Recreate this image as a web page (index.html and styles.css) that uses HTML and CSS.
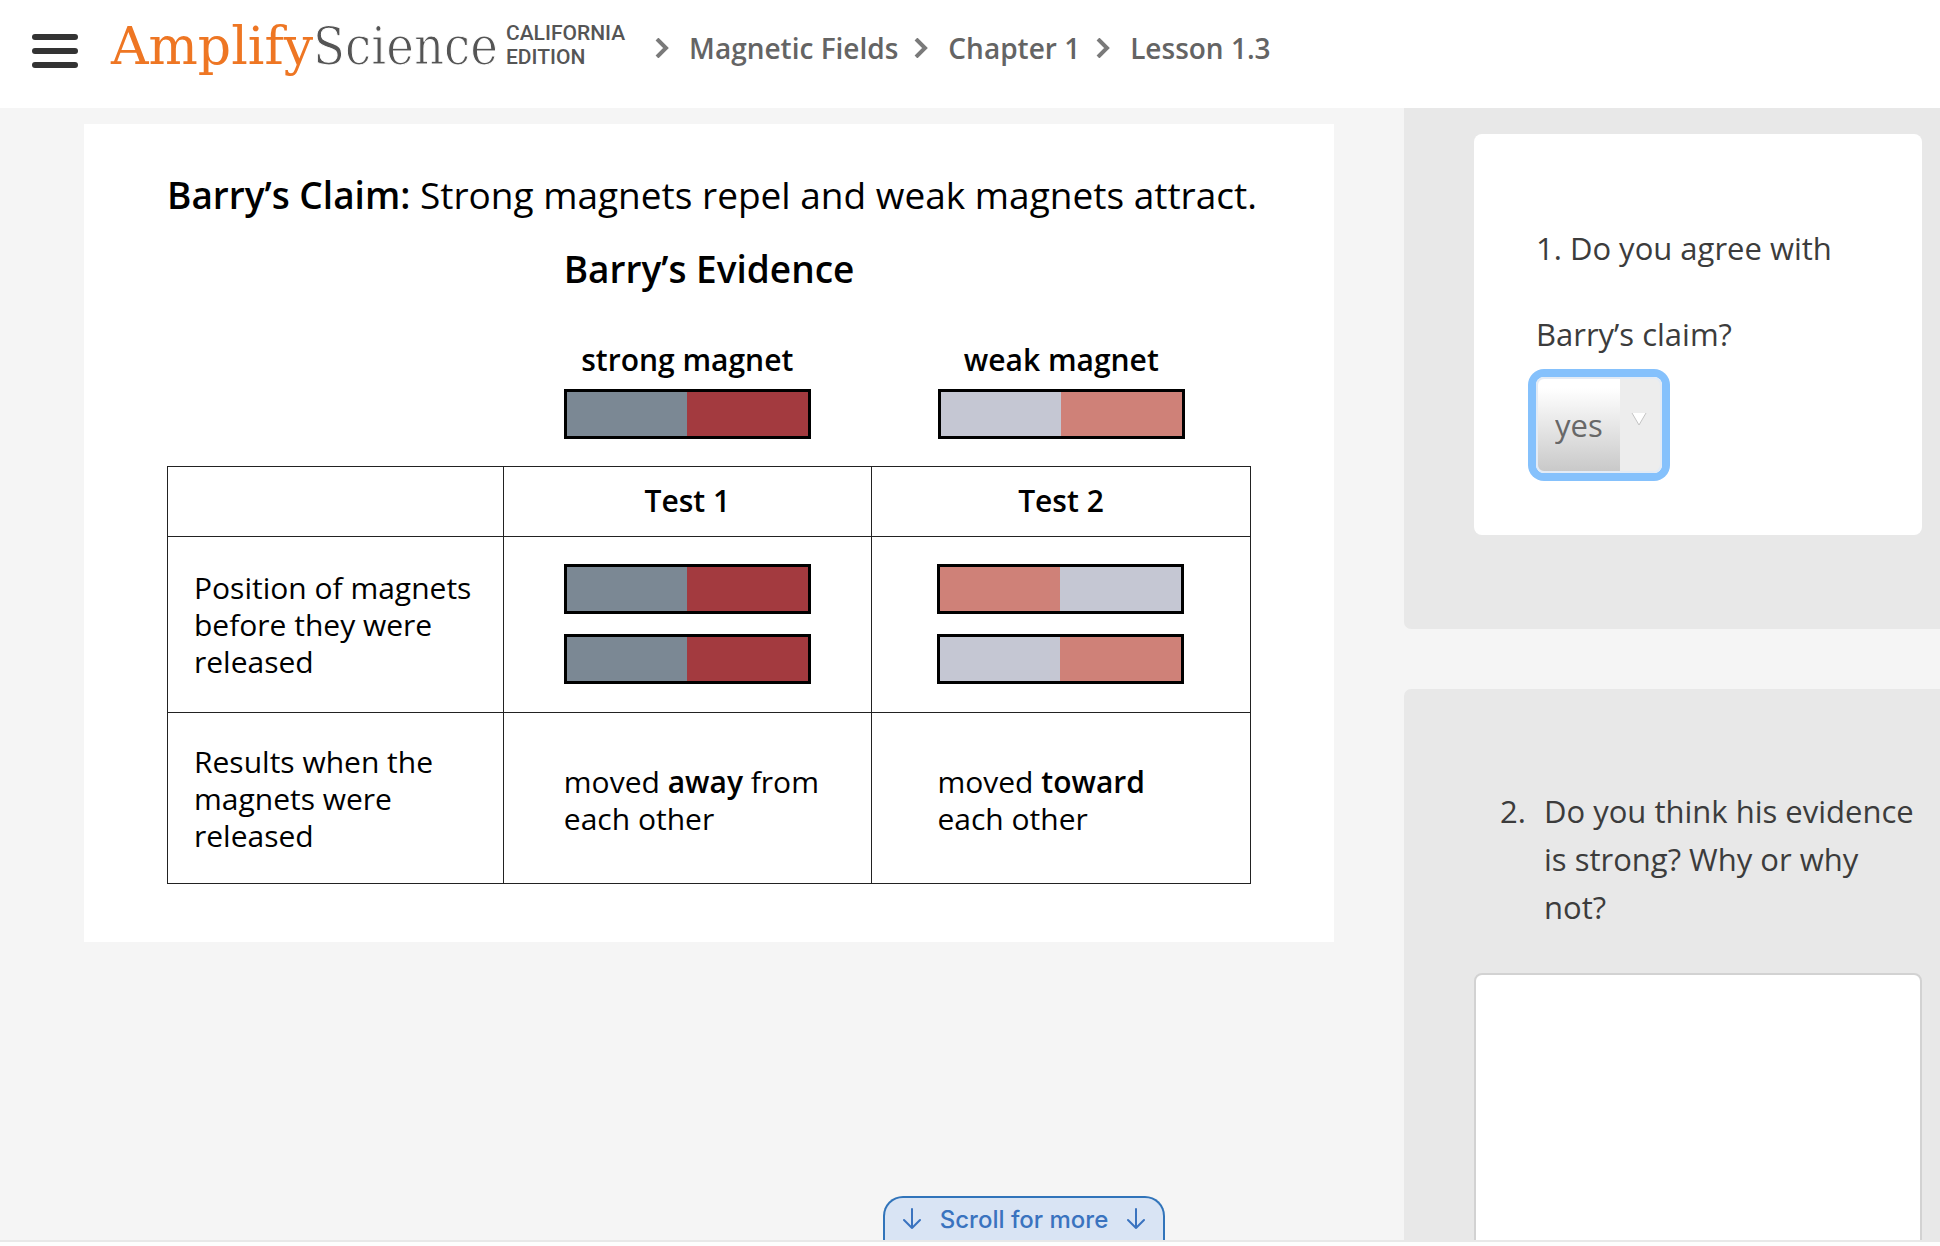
FILE: index.html
```html
<!DOCTYPE html>
<html lang="en">
<head>
    <meta charset="UTF-8">
    <meta name="viewport" content="width=device-width, initial-scale=1.0">
    <link rel="stylesheet" href="styles.css">
    <title>Magnetic Fields - Lesson 1.3</title>
</head>
<body>
    <header class="topbar">
        <button class="menu" type="button" aria-label="Menu">
            <span></span>
            <span></span>
            <span></span>
        </button>
        <a class="logo" href="#">
            <span class="logo-amplify">Amplify</span><span class="logo-science">Science</span>
            <span class="logo-edition">CALIFORNIA<br>EDITION</span>
        </a>
        <nav class="breadcrumbs" aria-label="Breadcrumb">
            <svg class="chevron" viewBox="0 0 14 20" aria-hidden="true"><path d="M2 1l9 9-9 9"/></svg>
            <a href="#">Magnetic Fields</a>
            <svg class="chevron" viewBox="0 0 14 20" aria-hidden="true"><path d="M2 1l9 9-9 9"/></svg>
            <a href="#">Chapter 1</a>
            <svg class="chevron" viewBox="0 0 14 20" aria-hidden="true"><path d="M2 1l9 9-9 9"/></svg>
            <a href="#">Lesson 1.3</a>
        </nav>
    </header>

    <main class="lesson">
        <section class="content">
            <article class="card">
                <p class="claim"><strong>Barry’s Claim:</strong> Strong magnets repel and weak magnets attract.</p>
                <h1 class="evidence-title">Barry’s Evidence</h1>
                <div class="legend">
                    <div class="legend-item strong-item">
                        <span>strong magnet</span>
                        <div class="magnet strong"></div>
                    </div>
                    <div class="legend-item weak-item">
                        <span>weak magnet</span>
                        <div class="magnet weak"></div>
                    </div>
                </div>
                <table class="evidence">
                    <colgroup>
                        <col class="col-label">
                        <col class="col-strong">
                        <col class="col-weak">
                    </colgroup>
                    <thead>
                        <tr>
                            <td></td>
                            <th scope="col">Test 1</th>
                            <th scope="col">Test 2</th>
                        </tr>
                    </thead>
                    <tbody>
                        <tr class="row-position">
                            <th scope="row">Position of magnets before they were released</th>
                            <td>
                                <div class="magnet strong"></div>
                                <div class="magnet strong"></div>
                            </td>
                            <td>
                                <div class="magnet weak flipped"></div>
                                <div class="magnet weak"></div>
                            </td>
                        </tr>
                        <tr class="row-result">
                            <th scope="row">Results when the magnets were released</th>
                            <td><div class="result">moved <strong>away</strong> from<br>each other</div></td>
                            <td><div class="result">moved <strong>toward</strong><br>each other</div></td>
                        </tr>
                    </tbody>
                </table>
            </article>
            <button class="scroll-more" type="button">
                <svg viewBox="0 0 18 22" aria-hidden="true"><path d="M9 1v19M1 12l8 8 8-8"/></svg>
                Scroll for more
                <svg viewBox="0 0 18 22" aria-hidden="true"><path d="M9 1v19M1 12l8 8 8-8"/></svg>
            </button>
        </section>

        <aside class="questions">
            <section class="panel panel-first">
                <div class="question-card">
                    <label for="agree">1. Do you agree with Barry’s claim?</label>
                    <div class="select-wrap">
                        <select id="agree">
                            <option selected>yes</option>
                            <option>no</option>
                        </select>
                        <svg viewBox="0 0 16 14" aria-hidden="true"><path d="M1 1h14L8 13z" fill="#fff"/><path d="M1 1l7 12 7-12" fill="none" stroke="#c4c4c4"/></svg>
                    </div>
                </div>
            </section>
            <section class="panel panel-second">
                <label class="question" for="answer">
                    <span class="question-number">2.</span>
                    <span>Do you think his evidence is strong? Why or why not?</span>
                </label>
                <textarea id="answer"></textarea>
            </section>
        </aside>
    </main>
</body>
</html>
```

FILE: styles.css
```css
* {
    box-sizing: border-box;
}

body {
    display: flex;
    flex-direction: column;
    height: 100vh;
    margin: 0;
    padding-bottom: 4px;
    overflow: hidden;
    font-family: "Open Sans", "Noto Sans", sans-serif;
    background-color: #fdfdfd;
    color: #000;
}

button,
select,
textarea {
    font-family: inherit;
}

/* top bar */

.topbar {
    display: flex;
    flex: none;
    align-items: flex-start;
    height: 108px;
    padding-left: 32px;
    background-color: #fff;
}

.menu {
    display: flex;
    flex-direction: column;
    gap: 8px;
    width: 46px;
    margin: 34px 33px 0 0;
    padding: 0;
    border: 0;
    background: none;
    cursor: pointer;
}

.menu span {
    width: 100%;
    height: 6px;
    border-radius: 3px;
    background-color: #333;
}

.logo {
    display: flex;
    color: #555;
    text-decoration: none;
    white-space: nowrap;
}

.logo-amplify,
.logo-science {
    margin-top: 14px;
    font-family: "DejaVu Serif", serif;
    font-size: 52px;
    line-height: 64px;
}

.logo-amplify {
    color: #ee7623;
}

.logo-science {
    font-family: "DejaVu Serif Condensed", "DejaVu Serif", serif;
    -webkit-text-stroke: 1px #fff;
}

.logo-edition {
    margin: 21px 0 0 8px;
    font-family: Roboto, sans-serif;
    font-size: 21px;
    font-weight: 500;
    line-height: 24px;
}

.breadcrumbs {
    display: flex;
    align-items: center;
    margin: 31px 0 0 30px;
    font-size: 28px;
    font-weight: 600;
    line-height: 34px;
    white-space: nowrap;
}

.breadcrumbs a {
    margin-right: 16px;
    color: #646464;
    text-decoration: none;
}

.chevron {
    width: 14px;
    height: 20px;
    margin-right: 20px;
    fill: none;
    stroke: #7a7a7a;
    stroke-width: 4;
}

/* lesson area */

.lesson {
    display: grid;
    flex: 1;
    grid-template-columns: minmax(0, 1fr) 536px;
    min-height: 0;
    overflow: hidden;
    border-bottom: 2px solid #e8e8e8;
    background-color: #f5f5f5;
}

.content {
    position: relative;
    padding: 16px 70px 0 84px;
}

.card {
    padding: 48px 83px 58px;
    background-color: #fff;
}

.claim,
.evidence-title {
    margin: 0;
    font-size: 37px;
    line-height: 46px;
    white-space: nowrap;
}

.claim strong,
.evidence-title {
    font-weight: 600;
}

.evidence-title {
    margin-top: 28px;
    text-align: center;
}

.legend {
    display: grid;
    grid-template-columns: 31% 34% 35%;
    margin: 50px 0 27px;
    font-size: 30px;
    font-weight: 600;
    line-height: 35px;
    text-align: center;
}

.strong-item {
    grid-column: 2;
}

.weak-item {
    grid-column: 3;
}

.legend-item .magnet {
    margin-top: 12px;
}

.magnet {
    width: 247px;
    height: 50px;
    margin: 0 auto;
    border: 3px solid #000;
}

.magnet + .magnet {
    margin-top: 20px;
}

.strong {
    background: linear-gradient(to right, #7b8894 50%, #a33a3f 50%);
}

.weak {
    background: linear-gradient(to right, #c5c7d3 50%, #cf8178 50%);
}

.weak.flipped {
    background: linear-gradient(to left, #c5c7d3 50%, #cf8178 50%);
}

.evidence {
    width: 100%;
    table-layout: fixed;
    border-collapse: collapse;
    font-size: 30px;
    line-height: 37px;
}

.col-label {
    width: 31%;
}

.col-strong {
    width: 34%;
}

.col-weak {
    width: 35%;
}

.evidence th,
.evidence td {
    padding: 0 0 2px;
    border: 1px solid #222;
}

.evidence thead tr {
    height: 70px;
}

.evidence thead th {
    font-weight: 600;
}

.evidence tbody th {
    padding: 0 16px 0 26px;
    font-weight: 400;
    text-align: left;
}

.row-position {
    height: 176px;
}

.row-result {
    height: 171px;
}

.result {
    width: 247px;
    margin: 0 auto;
    padding-top: 6px;
    white-space: nowrap;
}

.result strong {
    font-weight: 600;
}

.scroll-more {
    position: absolute;
    bottom: -2px;
    left: 883px;
    display: flex;
    align-items: center;
    justify-content: space-between;
    width: 282px;
    height: 46px;
    padding: 0 18px 2px;
    border: 2px solid #3174ba;
    border-bottom: 0;
    border-radius: 20px 20px 0 0;
    background-color: #d9e4f4;
    color: #3a73bf;
    font-family: Inter, sans-serif;
    font-size: 24px;
    font-weight: 500;
    cursor: pointer;
}

.scroll-more svg {
    width: 18px;
    height: 22px;
    fill: none;
    stroke: currentColor;
    stroke-width: 2;
    stroke-linecap: round;
    stroke-linejoin: round;
}

/* questions column */

.questions {
    display: flex;
    flex-direction: column;
    gap: 60px;
    min-height: 0;
    color: #3c3c3c;
    font-size: 31px;
}

.panel {
    padding: 0 18px 0 70px;
    background-color: #e8e8e8;
}

.panel-first {
    padding-top: 26px;
    padding-bottom: 94px;
    border-radius: 0 0 0 7px;
}

.question-card {
    padding: 71px 62px 62px;
    border-radius: 8px;
    background-color: #fff;
    line-height: 86px;
}

.question-card label {
    display: block;
}

.select-wrap {
    position: relative;
    width: 126px;
    height: 96px;
    border-radius: 8px;
    box-shadow: 0 0 0 8px #85c1fc;
}

.select-wrap select {
    width: 100%;
    height: 100%;
    padding: 0 42px 0 17px;
    border: 2px solid #e3ebf5;
    border-radius: 8px;
    outline: none;
    appearance: none;
    background: linear-gradient(#fff 10%, #c9c9c9) no-repeat left / 82px 100%, #ededed;
    color: #686868;
    font-size: 31px;
}

.select-wrap svg {
    position: absolute;
    top: 35px;
    right: 15px;
    width: 16px;
    height: 14px;
    pointer-events: none;
}

.panel-second {
    display: flex;
    flex: 1;
    flex-direction: column;
    min-height: 0;
    padding-top: 98px;
    border-radius: 7px 0 0 0;
}

.question {
    display: grid;
    grid-template-columns: 44px 1fr;
    margin-left: 26px;
    line-height: 48px;
}

#answer {
    flex: none;
    width: 100%;
    height: 400px;
    margin-top: 42px;
    padding: 16px;
    border: 2px solid #d2d2d2;
    border-radius: 8px;
    outline: none;
    background-color: #fff;
    font-size: 31px;
    resize: none;
}
```
